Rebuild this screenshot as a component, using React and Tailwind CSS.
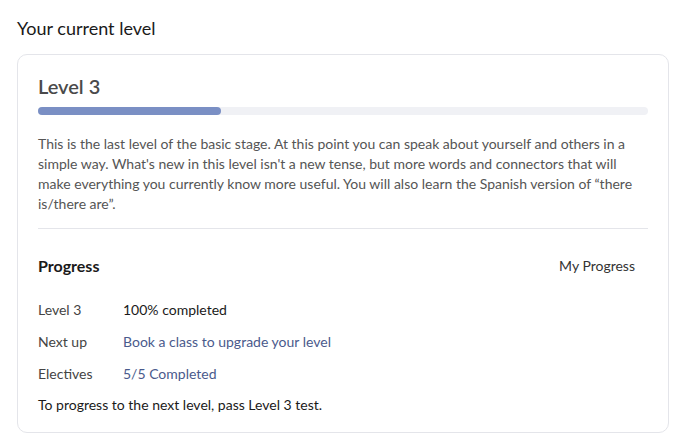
export default function App() {
  const rows = [
    { label: "Level 3", value: "100% completed", tone: "text-[#1a1a1a]" },
    { label: "Next up", value: "Book a class to upgrade your level", tone: "text-[#4a5a8c]" },
    { label: "Electives", value: "5/5 Completed", tone: "text-[#4a5a8c]" },
  ];

  return (
    <div className="min-h-screen bg-white px-[17px] pt-[17px] font-['Lato',sans-serif]">
      <h2 className="text-[18px] leading-[22px] text-[#1a1a1a]">Your current level</h2>

      <div className="mt-[15px] w-[652px] rounded-[10px] border border-[#e4e5ea] px-[20px] pt-[18px] pb-[17px]">
        {/* Header */}
        <h3 className="text-[20px] leading-[26px] font-semibold text-[#4a4a4a]">Level 3</h3>
        <div className="mt-[8px] h-[8px] w-full rounded-full bg-[#f0f1f5]">
          <div className="h-full w-[30%] rounded-full bg-[#7a8fc4]" />
        </div>

        <p className="mt-[19px] text-[14px] leading-[20px] text-[#555555]">
          This is the last level of the basic stage. At this point you can speak about yourself and others in a
          simple way. What's new in this level isn't a new tense, but more words and connectors that will
          make everything you currently know more useful. You will also learn the Spanish version of “there
          is/there are”.
        </p>

        <div className="mt-[14px] border-t border-[#e4e5ea]" />

        {/* Progress */}
        <div className="mt-[27px] flex items-center justify-between pr-[13px]">
          <span className="text-[16px] leading-[20px] font-bold text-[#1a1a1a]">Progress</span>
          <span className="text-[14px] leading-[20px] text-[#333333]">My Progress</span>
        </div>

        <div className="mt-[24px] flex flex-col gap-[12px] text-[14px] leading-[20px]">
          {rows.map((r) => (
            <div key={r.label} className="flex">
              <span className="w-[85px] text-[#444444]">{r.label}</span>
              <span className={r.tone}>{r.value}</span>
            </div>
          ))}
          <div className="-mt-[1px] text-[#1a1a1a]">To progress to the next level, pass Level 3 test.</div>
        </div>
      </div>
    </div>
  );
}
